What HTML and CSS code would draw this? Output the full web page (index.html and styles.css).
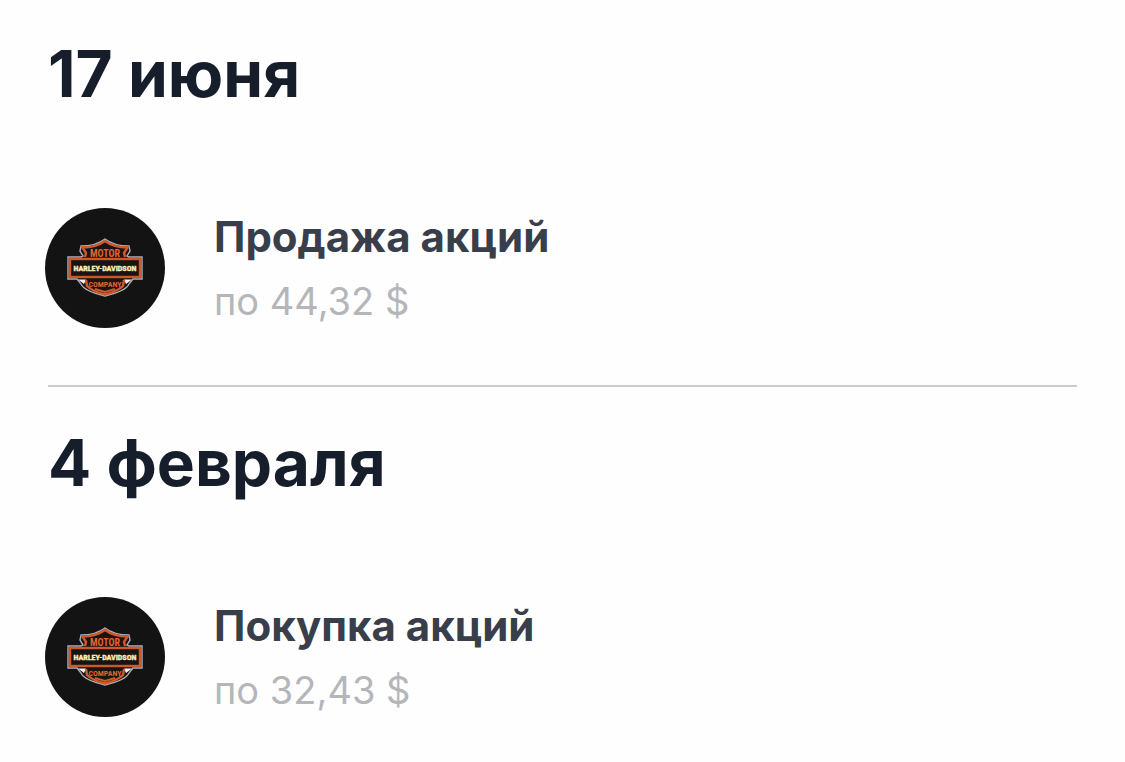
FILE: index.html
```html
<!DOCTYPE html>
<html lang="ru">
<head>
<meta charset="utf-8">
<meta name="viewport" content="width=device-width, initial-scale=1">
<title>История операций</title>
<link rel="stylesheet" href="styles.css">
</head>
<body>
<main class="history">
  <section class="period">
    <h2 class="date">17 июня</h2>
    <article class="deal">
      <svg class="logo" viewBox="0 0 120 120" role="img" aria-label="Harley-Davidson">
        <circle cx="60" cy="60" r="60" fill="#131313"/>
        <path d="M60 31Q51 38 36 38L35 43L38 48L36 49H23V71H32L36 76Q39 83 60 88Q81 83 84 76L88 71H97V49H84L82 48L85 43L84 38Q69 38 60 31Z" fill="#1c1410" stroke="#a9b0bd" stroke-width="1.400"/>
        <path d="M40 49L41 45L37.500 39.500Q51 39.500 60 33Q69 39.500 82.500 39.500L79 45L80 49" fill="none" stroke="#d05a2b" stroke-width="2.400"/>
        <path d="M33 71.500H41L39 76ZM87 71.500H79L81 76Z" fill="#f1f1f1"/>
        <path d="M41 72L42 78Q47 83 60 86.500Q73 83 78 78L79 72" fill="none" stroke="#d05a2b" stroke-width="2.400"/>
        <path d="M50 81L60 84L70 81" fill="none" stroke="#d05a2b" stroke-width="2"/>
        <text class="brand brand-top" x="60" y="49">MOTOR</text>
        <text class="brand brand-low" x="60" y="79">COMPANY</text>
        <rect x="25" y="51" width="70" height="18" fill="#171412" stroke="#ce5728" stroke-width="2.400"/>
        <text class="brand brand-name" x="60" y="63">HARLEY-DAVIDSON</text>
      </svg>
      <div class="details">
        <h3 class="title">Продажа акций</h3>
        <p class="price">по 44,32 $</p>
      </div>
    </article>
  </section>
  <hr class="divider">
  <section class="period">
    <h2 class="date">4 февраля</h2>
    <article class="deal">
      <svg class="logo" viewBox="0 0 120 120" role="img" aria-label="Harley-Davidson">
        <circle cx="60" cy="60" r="60" fill="#131313"/>
        <path d="M60 31Q51 38 36 38L35 43L38 48L36 49H23V71H32L36 76Q39 83 60 88Q81 83 84 76L88 71H97V49H84L82 48L85 43L84 38Q69 38 60 31Z" fill="#1c1410" stroke="#a9b0bd" stroke-width="1.400"/>
        <path d="M40 49L41 45L37.500 39.500Q51 39.500 60 33Q69 39.500 82.500 39.500L79 45L80 49" fill="none" stroke="#d05a2b" stroke-width="2.400"/>
        <path d="M33 71.500H41L39 76ZM87 71.500H79L81 76Z" fill="#f1f1f1"/>
        <path d="M41 72L42 78Q47 83 60 86.500Q73 83 78 78L79 72" fill="none" stroke="#d05a2b" stroke-width="2.400"/>
        <path d="M50 81L60 84L70 81" fill="none" stroke="#d05a2b" stroke-width="2"/>
        <text class="brand brand-top" x="60" y="49">MOTOR</text>
        <text class="brand brand-low" x="60" y="79">COMPANY</text>
        <rect x="25" y="51" width="70" height="18" fill="#171412" stroke="#ce5728" stroke-width="2.400"/>
        <text class="brand brand-name" x="60" y="63">HARLEY-DAVIDSON</text>
      </svg>
      <div class="details">
        <h3 class="title">Покупка акций</h3>
        <p class="price">по 32,43 $</p>
      </div>
    </article>
  </section>
</main>
</body>
</html>
```
FILE: styles.css
```css
* {
  box-sizing: border-box;
}

body {
  margin: 0;
  background: #fefefe;
  font-family: Inter, "Liberation Sans", sans-serif;
}

h2, h3, p {
  margin: 0;
}

.history {
  padding: 34px 48px 0;
}

.period {
  display: flex;
  flex-direction: column;
  gap: 94px;
}

.date {
  color: #161d2b;
  font-size: 64px;
  font-weight: 700;
  line-height: 80px;
}

.deal {
  display: flex;
  align-items: flex-start;
  gap: 49px;
  margin-left: -3px;
}

.logo {
  flex: none;
  width: 120px;
  height: 120px;
}

.title {
  color: #393e4b;
  font-size: 42px;
  font-weight: 700;
  line-height: 58px;
}

.price {
  padding-top: 7px;
  color: #b5b6ba;
  font-size: 38px;
  line-height: 56px;
}

.divider {
  height: 2px;
  margin: 56px 0 36px;
  border: 0;
  background: #cacbcd;
}

.brand {
  fill: #df6531;
  font-family: "Liberation Sans Narrow", "Roboto Condensed", Roboto, sans-serif;
  font-weight: 700;
  text-anchor: middle;
}

.brand-top {
  font-size: 10px;
}

.brand-low {
  font-size: 8px;
}

.brand-name {
  fill: #f5edb6;
  stroke: #f5edb6;
  stroke-width: 0.4px;
  font-size: 8px;
}
```
